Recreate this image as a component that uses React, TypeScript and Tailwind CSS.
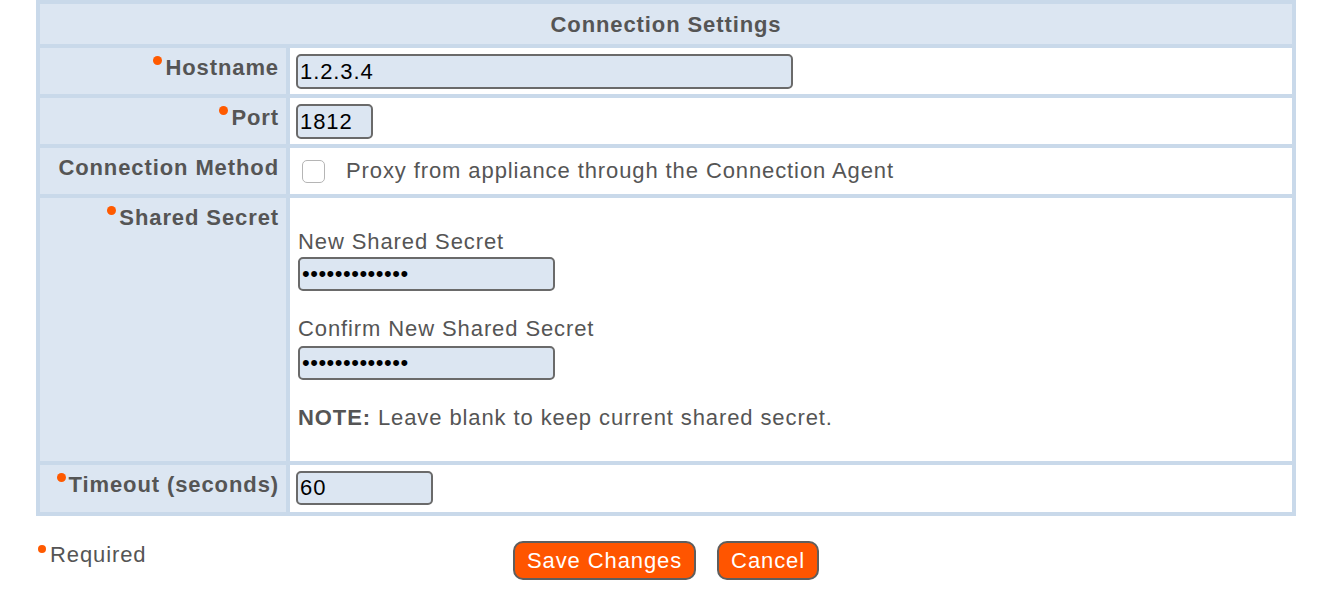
import React from "react";

const font = "font-['Liberation_Sans',Arial,Helvetica,sans-serif] tracking-[0.9px]";

/* small orange marker used for required fields */
const Req = () => (
  <span className="inline-block w-[9px] h-[9px] mt-[1px] mr-[3px] rounded-full bg-[#ff5a00] align-top" />
);

const Label: React.FC<{ children: React.ReactNode; required?: boolean }> = ({
  children,
  required,
}) => (
  <div className="bg-[#dce6f2] pt-[7px] pr-[7px] text-right text-[22px] leading-[26px] font-bold text-[#555]">
    {required && <Req />}
    {children}
  </div>
);

const inputCls =
  "block rounded-[5px] border-2 border-[#6a6a6a] bg-[#dce6f2] px-[2px] text-[22px] text-black outline-none";

const App: React.FC = () => {
  return (
    <div className={`${font} bg-white w-[1332px] h-[606px]`}>
      <div className="ml-[36px] w-[1260px]">
        {/* ---------------- SETTINGS TABLE ---------------- */}
        <div className="grid grid-cols-[246px_1fr] gap-1 p-1 bg-[#c9d9ea]">
          <div className="col-span-2 h-[40px] bg-[#dce6f2] flex items-center justify-center text-[22px] font-bold text-[#555]">
            Connection Settings
          </div>

          <Label required>Hostname</Label>
          <div className="bg-white h-[46px] pt-[6px] pl-[6px]">
            <input className={`${inputCls} h-[35px] w-[497px] tracking-[0.9px]`} defaultValue="1.2.3.4" />
          </div>

          <Label required>Port</Label>
          <div className="bg-white h-[46px] pt-[6px] pl-[6px]">
            <input className={`${inputCls} h-[35px] w-[77px] tracking-[0.9px]`} defaultValue="1812" />
          </div>

          <Label>Connection Method</Label>
          <div className="bg-white h-[46px] pl-[12px] flex items-center">
            <span className="inline-block w-[23px] h-[23px] rounded-[5px] border border-[#b5b5b5] bg-white" />
            <span className="ml-[21px] text-[22px] leading-[26px] text-[#555]">
              Proxy from appliance through the Connection Agent
            </span>
          </div>

          <Label required>Shared Secret</Label>
          <div className="bg-white pt-[31px] pb-[30px] pl-[8px] text-[22px] leading-[26px] text-[#555]">
            <div>New Shared Secret</div>
            <input
              type="password"
              className={`${inputCls} mt-[2px] h-[34px] w-[257px] tracking-[0.5px]`}
              defaultValue="aaaaaaaaaaaaa"
            />
            <div className="mt-[25px]">Confirm New Shared Secret</div>
            <input
              type="password"
              className={`${inputCls} mt-[4px] h-[34px] w-[257px] tracking-[0.5px]`}
              defaultValue="aaaaaaaaaaaaa"
            />
            <div className="mt-[25px]">
              <span className="font-bold">NOTE:</span> Leave blank to keep current shared secret.
            </div>
          </div>

          <Label required>Timeout (seconds)</Label>
          <div className="bg-white h-[47px] pt-[6px] pl-[6px]">
            <input className={`${inputCls} h-[34px] w-[137px] tracking-[0.9px]`} defaultValue="60" />
          </div>
        </div>

        {/* ---------------- FOOTER ---------------- */}
        <div className="grid grid-cols-[1fr_auto_1fr] items-start pt-[25px]">
          <div className="pl-[2px] pt-[1px] text-[22px] leading-[26px] text-[#555]">
            <span className="inline-block w-[8px] h-[8px] mt-[3px] mr-[4px] rounded-full bg-[#ff5a00] align-top" />
            Required
          </div>
          <div className="flex gap-[21px]">
            <button className="h-[39px] px-[12px] rounded-[10px] border-2 border-[#5e5e5e] bg-[#ff5500] text-white text-[22px] tracking-[0.9px]">
              Save Changes
            </button>
            <button className="h-[39px] px-[12px] rounded-[10px] border-2 border-[#5e5e5e] bg-[#ff5500] text-white text-[22px] tracking-[0.9px]">
              Cancel
            </button>
          </div>
          <div />
        </div>
      </div>
    </div>
  );
};

export default App;
